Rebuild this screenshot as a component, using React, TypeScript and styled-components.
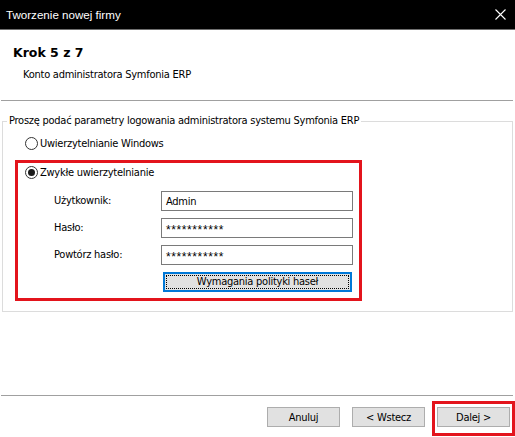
import React from 'react';
import styled, { createGlobalStyle } from 'styled-components';

const GlobalStyle = createGlobalStyle`
    html, body {
        margin: 0;
        padding: 0;
        background: #ffffff;
    }
    * {
        box-sizing: border-box;
    }
`;

const Window = styled.div`
    width: 515px;
    height: 437px;
    display: flex;
    flex-direction: column;
    background: #ffffff;
    font-family: "DejaVu Sans Condensed", "DejaVu Sans", sans-serif;
    font-size: 11px;
    letter-spacing: -0.25px;
    color: #000000;
    overflow: hidden;
`;

const TitleBar = styled.div`
    height: 30px;
    flex-shrink: 0;
    display: flex;
    align-items: center;
    justify-content: space-between;
    padding: 0 0 1px 6px;
    background: #000000;
    border-bottom: 1px solid #6f6f6f;
    color: #ffffff;
    font-family: "Liberation Sans", Arial, sans-serif;
    font-size: 11.6px;
    letter-spacing: 0;
`;

const CloseButton = styled.div`
    width: 30px;
    height: 29px;
    display: flex;
    align-items: center;
    justify-content: center;
`;

const Header = styled.div`
    height: 70px;
    flex-shrink: 0;
    padding: 15px 13px 0 13px;
`;

const StepTitle = styled.div`
    font-family: "DejaVu Sans", sans-serif;
    font-weight: bold;
    font-size: 12.5px;
    letter-spacing: 0;
    line-height: 16px;
`;

const StepSubtitle = styled.div`
    margin: 7px 0 0 10px;
    line-height: 14px;
`;

const Separator = styled.div`
    height: 1px;
    flex-shrink: 0;
    margin: 0 2px 0 1px;
    background: #a0a0a0;
`;

const Content = styled.div`
    flex: 1;
    padding: 12px 2px 0 2px;
`;

const GroupBox = styled.fieldset`
    margin: 0;
    padding: 0 0 10px 0;
    border: 1px solid #dcdcdc;
    min-inline-size: 0;
`;

const Legend = styled.legend`
    margin-left: 4px;
    padding: 0 2px;
    line-height: 16px;
`;

const RadioRow = styled.label<{ $indent: number }>`
    display: flex;
    align-items: center;
    gap: 2px;
    height: 16px;
    padding-left: ${p => p.$indent}px;
`;

const RadioCircle = styled.span<{ $checked: boolean }>`
    width: 13px;
    height: 13px;
    border-radius: 50%;
    border: 1px solid #333333;
    background: #ffffff;
    display: flex;
    align-items: center;
    justify-content: center;
    &::after {
        content: '';
        display: ${p => (p.$checked ? 'block' : 'none')};
        width: 7px;
        height: 7px;
        border-radius: 50%;
        background: #1a1a1a;
    }
`;

const FirstRadio = styled.div`
    margin-top: 6px;
`;

const Highlight = styled.div`
    margin: 9px 0 0 12px;
    width: 347px;
    border: 3px solid #e3141c;
    padding: 1px 6px 6px 7px;
`;

const FormGrid = styled.div`
    display: grid;
    grid-template-columns: 107px 192px;
    row-gap: 7px;
    margin: 11px 0 0 29px;
    align-items: center;
`;

const FieldLabel = styled.span`
    line-height: 20px;
`;

const TextBox = styled.div`
    height: 20px;
    border: 1px solid #7a7a7a;
    background: #ffffff;
    padding: 0 4px;
    display: flex;
    align-items: center;
`;

const Masked = styled.span`
    font-family: "Liberation Sans", Arial, sans-serif;
    font-size: 12px;
    letter-spacing: 0.6px;
    color: #000000;
    padding-top: 3px;
`;

const PolicyButton = styled.div`
    grid-column: 2;
    margin: 0 0 0 2px;
    width: 189px;
    height: 20px;
    border: 2px solid #0078d7;
    background: #e1e1e1;
    padding: 1px;
    display: flex;
`;

const FocusRect = styled.div`
    flex: 1;
    border: 1px dotted #000000;
    display: flex;
    align-items: center;
    justify-content: center;
    line-height: 14px;
`;

const Footer = styled.div`
    height: 41px;
    flex-shrink: 0;
    display: flex;
    justify-content: flex-end;
    align-items: flex-start;
    padding-top: 5px;
`;

const WizardButton = styled.div`
    width: 73px;
    height: 20px;
    border: 1px solid #adadad;
    background: #e1e1e1;
    display: flex;
    align-items: center;
    justify-content: center;
    margin-right: 12px;
    margin-top: 6px;
`;

const NextWrap = styled.div`
    border: 3px solid #e3141c;
    padding: 3px 2px 6px 2px;
    margin-left: -5px;
    ${WizardButton} {
        margin: 0;
    }
`;

const CloseIcon = () => (
    <svg width="11" height="11" viewBox="0 0 11 11">
        <path d="M0.5 0.5 L10.5 10.5 M10.5 0.5 L0.5 10.5" stroke="#ffffff" strokeWidth="1.1" />
    </svg>
);

const App: React.FC = () => {
    return (
        <>
            <GlobalStyle />
            <Window>
                <TitleBar>
                    <span>Tworzenie nowej firmy</span>
                    <CloseButton><CloseIcon /></CloseButton>
                </TitleBar>

                <Header>
                    <StepTitle>Krok 5 z 7</StepTitle>
                    <StepSubtitle>Konto administratora Symfonia ERP</StepSubtitle>
                </Header>

                <Separator />

                <Content>
                    <GroupBox>
                        <Legend>Proszę podać parametry logowania administratora systemu Symfonia ERP</Legend>
                        <FirstRadio>
                            <RadioRow $indent={22}>
                                <RadioCircle $checked={false} />
                                <span>Uwierzytelnianie Windows</span>
                            </RadioRow>
                        </FirstRadio>

                        <Highlight>
                            <RadioRow $indent={0}>
                                <RadioCircle $checked={true} />
                                <span>Zwykłe uwierzytelnianie</span>
                            </RadioRow>
                            <FormGrid>
                                <FieldLabel>Użytkownik:</FieldLabel>
                                <TextBox>Admin</TextBox>
                                <FieldLabel>Hasło:</FieldLabel>
                                <TextBox><Masked>***********</Masked></TextBox>
                                <FieldLabel>Powtórz hasło:</FieldLabel>
                                <TextBox><Masked>***********</Masked></TextBox>
                                <PolicyButton>
                                    <FocusRect>Wymagania polityki haseł</FocusRect>
                                </PolicyButton>
                            </FormGrid>
                        </Highlight>
                    </GroupBox>
                </Content>

                <Separator />

                <Footer>
                    <WizardButton>Anuluj</WizardButton>
                    <WizardButton>&lt; Wstecz</WizardButton>
                    <NextWrap>
                        <WizardButton>Dalej &gt;</WizardButton>
                    </NextWrap>
                </Footer>
            </Window>
        </>
    );
};

export default App;
